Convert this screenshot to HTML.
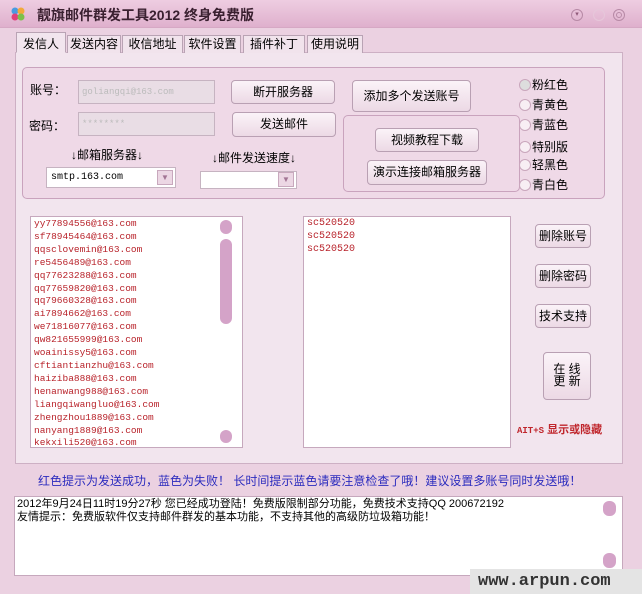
<!DOCTYPE html>
<html><head><meta charset="utf-8"><style>
*{margin:0;padding:0;box-sizing:border-box}
body{width:642px;height:594px;overflow:hidden;background:#ebd1e1;font-family:"Liberation Sans","Noto Sans CJK SC",sans-serif;font-size:12px;color:#000;position:relative}
.a{position:absolute}
.title{left:0;top:0;width:642px;height:28px;background:linear-gradient(#eecde1,#dfb0cd);border-bottom:1px solid #d6a8c4}
.tab{position:absolute;top:35px;height:18px;border:1px solid #b9a3b4;border-bottom:none;background:#f1e3ec;font-size:12px;text-align:center;line-height:17px}
.panel{left:15px;top:52px;width:608px;height:412px;background:#f2e5ee;border:1px solid #cdb0c4}
.grp{border:1px solid #c9a3bd;border-radius:5px;background:#efd9e7}
.btn{position:absolute;border:1px solid #b9a0b3;border-radius:4px;background:linear-gradient(#fbf3f8,#ecd9e5);text-align:center;font-size:12px}
.inp{position:absolute;background:#e9dde5;border:1px solid #c6b3c1;color:#bbb;font-family:"Liberation Mono",monospace;font-size:9px;padding-left:3px;line-height:22px}
.rad{position:absolute;left:519px;font-size:12px}
.rad i{display:inline-block;width:12px;height:12px;border:1px solid #c9a6bc;border-radius:50%;background:#f8eef4;vertical-align:-2px;margin-right:1px}
.list{position:absolute;background:#fff;border:1px solid #c6a8bd;overflow:hidden}
.em{font-family:"Liberation Mono",monospace;font-size:9.5px;color:#b8222a;line-height:12.9px;padding-left:3px;padding-top:1px}
.th{position:absolute;background:#d4a3c8;border-radius:6px}
</style></head><body>
<div class="a title"></div>
<div class="a" style="left:10px;top:6px;width:16px;height:16px">
<svg width="16" height="16"><circle cx="5" cy="5" r="3.5" fill="#4a9be0"/><circle cx="11" cy="5" r="3.5" fill="#f2a93a"/><circle cx="5" cy="11" r="3.5" fill="#e0407a"/><circle cx="11" cy="11" r="3.5" fill="#7cc04a"/></svg></div>
<div class="a" style="left:37px;top:5px;font-size:14px;font-weight:bold;color:#3a2030">靓旗邮件群发工具2012 终身免费版</div>
<div class="a" style="left:571px;top:9px;width:12px;height:12px;border:1px solid #b78aa6;border-radius:50%;font-size:7px;text-align:center;line-height:10px;color:#905a7a">▾</div>
<div class="a" style="left:593px;top:9px;width:12px;height:12px;border:1px solid #e6c7da;border-radius:50%"></div>
<div class="a" style="left:613px;top:9px;width:12px;height:12px;border:1px solid #b78aa6;border-radius:50%;"><div style="margin:2px;width:6px;height:6px;border:1px solid #b78aa6;border-radius:50%"></div></div>

<div class="a panel"></div>
<div class="tab" style="left:16px;top:32px;width:50px;height:21px;background:#f2e5ee;border-bottom:1px solid #f2e5ee;line-height:22px">发信人</div>
<div class="tab" style="left:67px;width:54px">发送内容</div>
<div class="tab" style="left:122px;width:61px">收信地址</div>
<div class="tab" style="left:184px;width:57px">软件设置</div>
<div class="tab" style="left:243px;width:62px">插件补丁</div>
<div class="tab" style="left:307px;width:56px">使用说明</div>

<div class="a grp" style="left:22px;top:67px;width:583px;height:132px"></div>
<div class="a" style="left:30px;top:81px">账号：</div>
<div class="inp" style="left:78px;top:80px;width:137px;height:24px">goliangqi@163.com</div>
<div class="a" style="left:29px;top:117px">密码：</div>
<div class="inp" style="left:78px;top:112px;width:137px;height:24px">********</div>
<div class="btn" style="left:231px;top:80px;width:104px;height:24px;line-height:22px">断开服务器</div>
<div class="btn" style="left:232px;top:112px;width:104px;height:25px;line-height:23px">发送邮件</div>
<div class="btn" style="left:352px;top:80px;width:119px;height:32px;line-height:30px">添加多个发送账号</div>
<div class="a grp" style="left:343px;top:115px;width:177px;height:77px;background:#efd9e7"></div>
<div class="btn" style="left:375px;top:128px;width:104px;height:24px;line-height:22px">视频教程下载</div>
<div class="btn" style="left:367px;top:160px;width:120px;height:25px;line-height:23px">演示连接邮箱服务器</div>
<div class="rad" style="top:76px"><i style="background:#ddd"></i>粉红色</div>
<div class="rad" style="top:96px"><i></i>青黄色</div>
<div class="rad" style="top:116px"><i></i>青蓝色</div>
<div class="rad" style="top:138px"><i></i>特别版</div>
<div class="rad" style="top:156px"><i></i>轻黑色</div>
<div class="rad" style="top:176px"><i></i>青白色</div>
<div class="a" style="left:71px;top:146px">↓邮箱服务器↓</div>
<div class="a" style="left:212px;top:149px">↓邮件发送速度↓</div>
<div class="a" style="left:46px;top:167px;width:130px;height:21px;background:#fff;border:1px solid #c6b3c1;font-family:'Liberation Mono',monospace;font-size:10px;line-height:19px;padding-left:4px">smtp.163.com</div>
<div class="a" style="left:157px;top:170px;width:16px;height:15px;background:#ecd7e4;border:1px solid #c8a8bd;color:#a27594;font-size:8px;text-align:center;line-height:14px">▼</div>
<div class="a" style="left:200px;top:171px;width:97px;height:18px;background:#fff;border:1px solid #c6b3c1"></div>
<div class="a" style="left:278px;top:172px;width:16px;height:15px;background:#ecd7e4;border:1px solid #c8a8bd;color:#a27594;font-size:8px;text-align:center;line-height:14px">▼</div>

<div class="list" style="left:30px;top:216px;width:213px;height:232px"><div class="em">yy77894556@163.com<br>sf78945464@163.com<br>qqsclovemin@163.com<br>re5456489@163.com<br>qq77623288@163.com<br>qq77659820@163.com<br>qq79660328@163.com<br>ai7894662@163.com<br>we71816077@163.com<br>qw821655999@163.com<br>woainissy5@163.com<br>cftiantianzhu@163.com<br>haiziba888@163.com<br>henanwang988@163.com<br>liangqiwangluo@163.com<br>zhengzhou1889@163.com<br>nanyang1889@163.com<br>kekxili520@163.com</div></div>
<div class="th" style="left:220px;top:220px;width:12px;height:14px"></div>
<div class="th" style="left:220px;top:239px;width:12px;height:85px"></div>
<div class="th" style="left:220px;top:430px;width:12px;height:13px"></div>
<div class="list" style="left:303px;top:216px;width:208px;height:232px"><div class="em" style="font-size:10px">sc520520<br>sc520520<br>sc520520</div></div>
<div class="btn" style="left:535px;top:224px;width:56px;height:24px;line-height:22px">删除账号</div>
<div class="btn" style="left:535px;top:264px;width:56px;height:24px;line-height:22px">删除密码</div>
<div class="btn" style="left:535px;top:304px;width:56px;height:24px;line-height:22px">技术支持</div>
<div class="btn" style="left:543px;top:352px;width:48px;height:48px;padding-top:10px;line-height:12px">在 线<br>更 新</div>
<div class="a" style="left:517px;top:421px;color:#c0262c;font-size:11px;font-weight:bold"><span style="font-family:'Liberation Mono',monospace;font-size:9px">AIT+S</span> 显示或隐藏</div>

<div class="a" style="left:38px;top:472px;color:#2c2cbe;font-size:12px">红色提示为发送成功，蓝色为失败！ 长时间提示蓝色请要注意检查了哦！建议设置多账号同时发送哦！</div>
<div class="a" style="left:14px;top:496px;width:609px;height:80px;background:#fff;border:1px solid #c6a8bd;font-size:11px;line-height:13px;padding:1px 2px">2012年9月24日11时19分27秒 您已经成功登陆！免费版限制部分功能，免费技术支持QQ 200672192<br>友情提示：免费版软件仅支持邮件群发的基本功能，不支持其他的高级防垃圾箱功能！</div>
<div class="th" style="left:603px;top:501px;width:13px;height:15px"></div>
<div class="th" style="left:603px;top:553px;width:13px;height:15px"></div>
<div class="a" style="left:470px;top:569px;width:172px;height:25px;background:#e4e4e4;color:#333;font-family:'Liberation Mono',monospace;font-weight:bold;font-size:17px;line-height:25px;padding-left:8px">www.arpun.com</div>
</body></html>
